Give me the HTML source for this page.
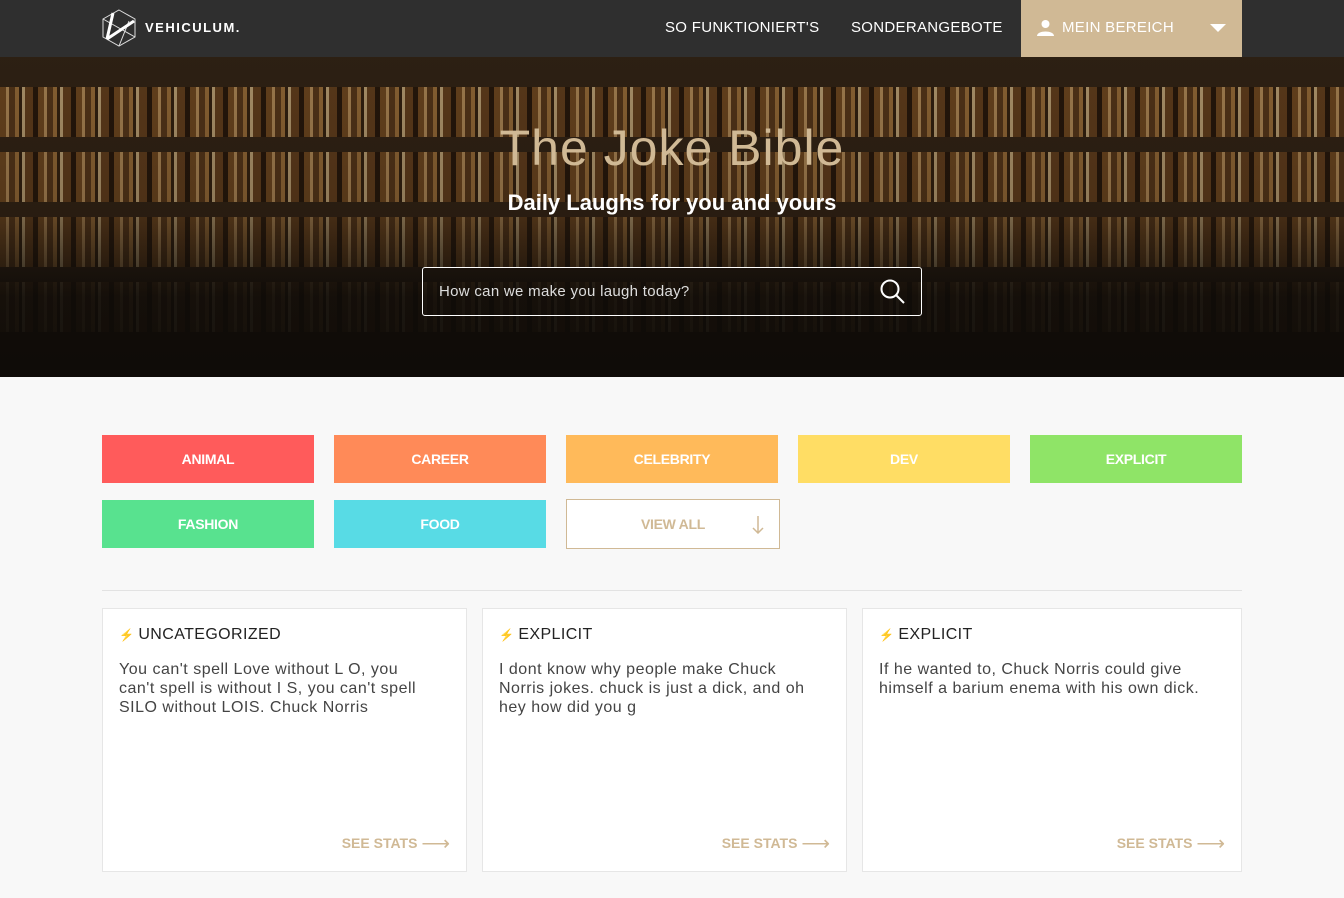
<!DOCTYPE html>
<html><head><meta charset="utf-8"><style>
*{margin:0;padding:0;box-sizing:border-box}
body{width:1344px;height:898px;overflow:hidden;background:#f8f8f8;font-family:"Liberation Sans",sans-serif;color:#333}
.nav{height:57px;background:#2f2f2f;position:relative}
.logo{position:absolute;left:101px;top:9px}
.brand{position:absolute;left:145px;top:20px;color:#fff;font-weight:bold;font-size:13px;letter-spacing:1.5px}
.nl{position:absolute;top:19px;color:#fff;font-size:15px;letter-spacing:.3px}
.mb{position:absolute;left:1021px;top:0;width:221px;height:57px;background:#d0b995;color:#fff;font-size:15px;letter-spacing:.3px}
.hero{height:320px;position:relative;overflow:hidden;background:#3a2a1a}
.shelf{position:absolute;left:0;right:0;height:50px;background:repeating-linear-gradient(90deg,#8a5a28 0 6px,#e0b070 6px 9px,#6a4420 9px 15px,#c08a48 15px 19px,#3a2612 19px 22px,#f0d098 22px 25px,#7a4e24 25px 33px,#2a1a0c 33px 38px)}
.hero .ov{position:absolute;inset:0;background:linear-gradient(180deg,rgba(20,12,6,.35) 0,rgba(20,12,6,.45) 50%,rgba(10,8,6,.85) 75%,rgba(10,8,6,.9) 100%)}
.ht{position:absolute;left:0;right:0;text-align:center;top:62px;color:#d0b995;font-size:50px;font-weight:300;letter-spacing:1px}
.hs{position:absolute;left:0;right:0;text-align:center;top:133px;color:#fff;font-size:22px;font-weight:bold}
.search{position:absolute;left:422px;top:210px;width:500px;height:49px;border:1px solid #fff;border-radius:3px;color:#ddd;font-size:15px;padding:15px 16px;letter-spacing:.3px}
.cat{position:absolute;width:212px;height:48px;color:#fff;font-weight:bold;font-size:14px;text-align:center;line-height:48px;letter-spacing:-.3px}
.card{position:absolute;top:608px;height:264px;background:#fff;border:1px solid #e6e6e6}
.card h4{position:absolute;left:16px;top:17px;font-size:16px;font-weight:normal;color:#222;letter-spacing:.4px}
.card h4 b{color:#f5d24a;font-weight:normal;font-size:12px;margin-right:4px}
.card p{position:absolute;left:16px;top:51px;right:0;font-size:16px;line-height:19px;color:#444;letter-spacing:.5px;white-space:nowrap}
.ss{position:absolute;right:16px;bottom:15px;color:#d0b995;font-size:14px;font-weight:bold}
</style></head><body>
<div class="nav">
<svg class="logo" width="36" height="38" viewBox="0 0 36 38" fill="none" stroke="#ddd" stroke-width="1"><polygon points="18,1 34,10 34,28 18,37 2,28 2,10"/><path d="M2,10 L34,28 M18,37 L28,12"/><path d="M6,30 L12,4 M6,30 L33,12" stroke="#fff" stroke-width="3"/></svg>
<div class="brand">VEHICULUM.</div>
<div class="nl" style="left:665px">SO FUNKTIONIERT'S</div>
<div class="nl" style="left:851px">SONDERANGEBOTE</div>
<div class="mb"><svg style="position:absolute;left:16px;top:19px" width="17" height="17" viewBox="0 0 17 17" fill="#fff"><circle cx="8.5" cy="5" r="4"/><path d="M0,17 C0,11 17,11 17,17Z"/></svg><span style="position:absolute;left:41px;top:19px">MEIN BEREICH</span><svg style="position:absolute;left:189px;top:24px" width="16" height="8"><path d="M0,0H16L8,8Z" fill="#fff"/></svg></div>
</div>
<div class="hero">
<div class="shelf" style="top:30px"></div><div class="shelf" style="top:95px"></div><div class="shelf" style="top:160px;opacity:.8"></div><div class="shelf" style="top:225px;opacity:.4"></div>
<div class="ov"></div>
<div class="ht">The Joke Bible</div>
<div class="hs">Daily Laughs for you and yours</div>
<div class="search">How can we make you laugh today?<svg style="position:absolute;right:15px;top:11px" width="26" height="26" fill="none" stroke="#fff" stroke-width="2"><circle cx="10" cy="10" r="8.5"/><path d="M16,16L24,24"/></svg></div>
</div>
<div class="cat" style="left:102px;top:435px;background:#ff5b5b">ANIMAL</div>
<div class="cat" style="left:334px;top:435px;background:#ff8a58">CAREER</div>
<div class="cat" style="left:566px;top:435px;background:#ffba5a">CELEBRITY</div>
<div class="cat" style="left:798px;top:435px;background:#ffdd64">DEV</div>
<div class="cat" style="left:1030px;top:435px;background:#8fe467">EXPLICIT</div>
<div class="cat" style="left:102px;top:500px;background:#58e28f">FASHION</div>
<div class="cat" style="left:334px;top:500px;background:#58dbe5">FOOD</div>
<div class="cat" style="left:566px;top:499px;width:214px;height:50px;border:1px solid #d0b995;color:#d0b995;background:#fff;line-height:48px">VIEW ALL<svg style="position:absolute;right:15px;top:16px" width="12" height="18" fill="none" stroke="#d0b995" stroke-width="1.5"><path d="M6,0V17M1,12L6,17L11,12"/></svg></div>
<div style="position:absolute;left:102px;top:590px;width:1140px;height:1px;background:#e2e2e2"></div>
<div class="card" style="left:102px;width:365px"><h4><b>⚡</b>UNCATEGORIZED</h4><p>You can't spell Love without L O, you<br>can't spell is without I S, you can't spell<br>SILO without LOIS. Chuck Norris</p><div class="ss">SEE STATS <span style="font-size:20px;font-weight:normal;vertical-align:-2px">⟶</span></div></div>
<div class="card" style="left:482px;width:365px"><h4><b>⚡</b>EXPLICIT</h4><p>I dont know why people make Chuck<br>Norris jokes. chuck is just a dick, and oh<br>hey how did you g</p><div class="ss">SEE STATS <span style="font-size:20px;font-weight:normal;vertical-align:-2px">⟶</span></div></div>
<div class="card" style="left:862px;width:380px"><h4><b>⚡</b>EXPLICIT</h4><p>If he wanted to, Chuck Norris could give<br>himself a barium enema with his own dick.</p><div class="ss">SEE STATS <span style="font-size:20px;font-weight:normal;vertical-align:-2px">⟶</span></div></div>
</body></html>
